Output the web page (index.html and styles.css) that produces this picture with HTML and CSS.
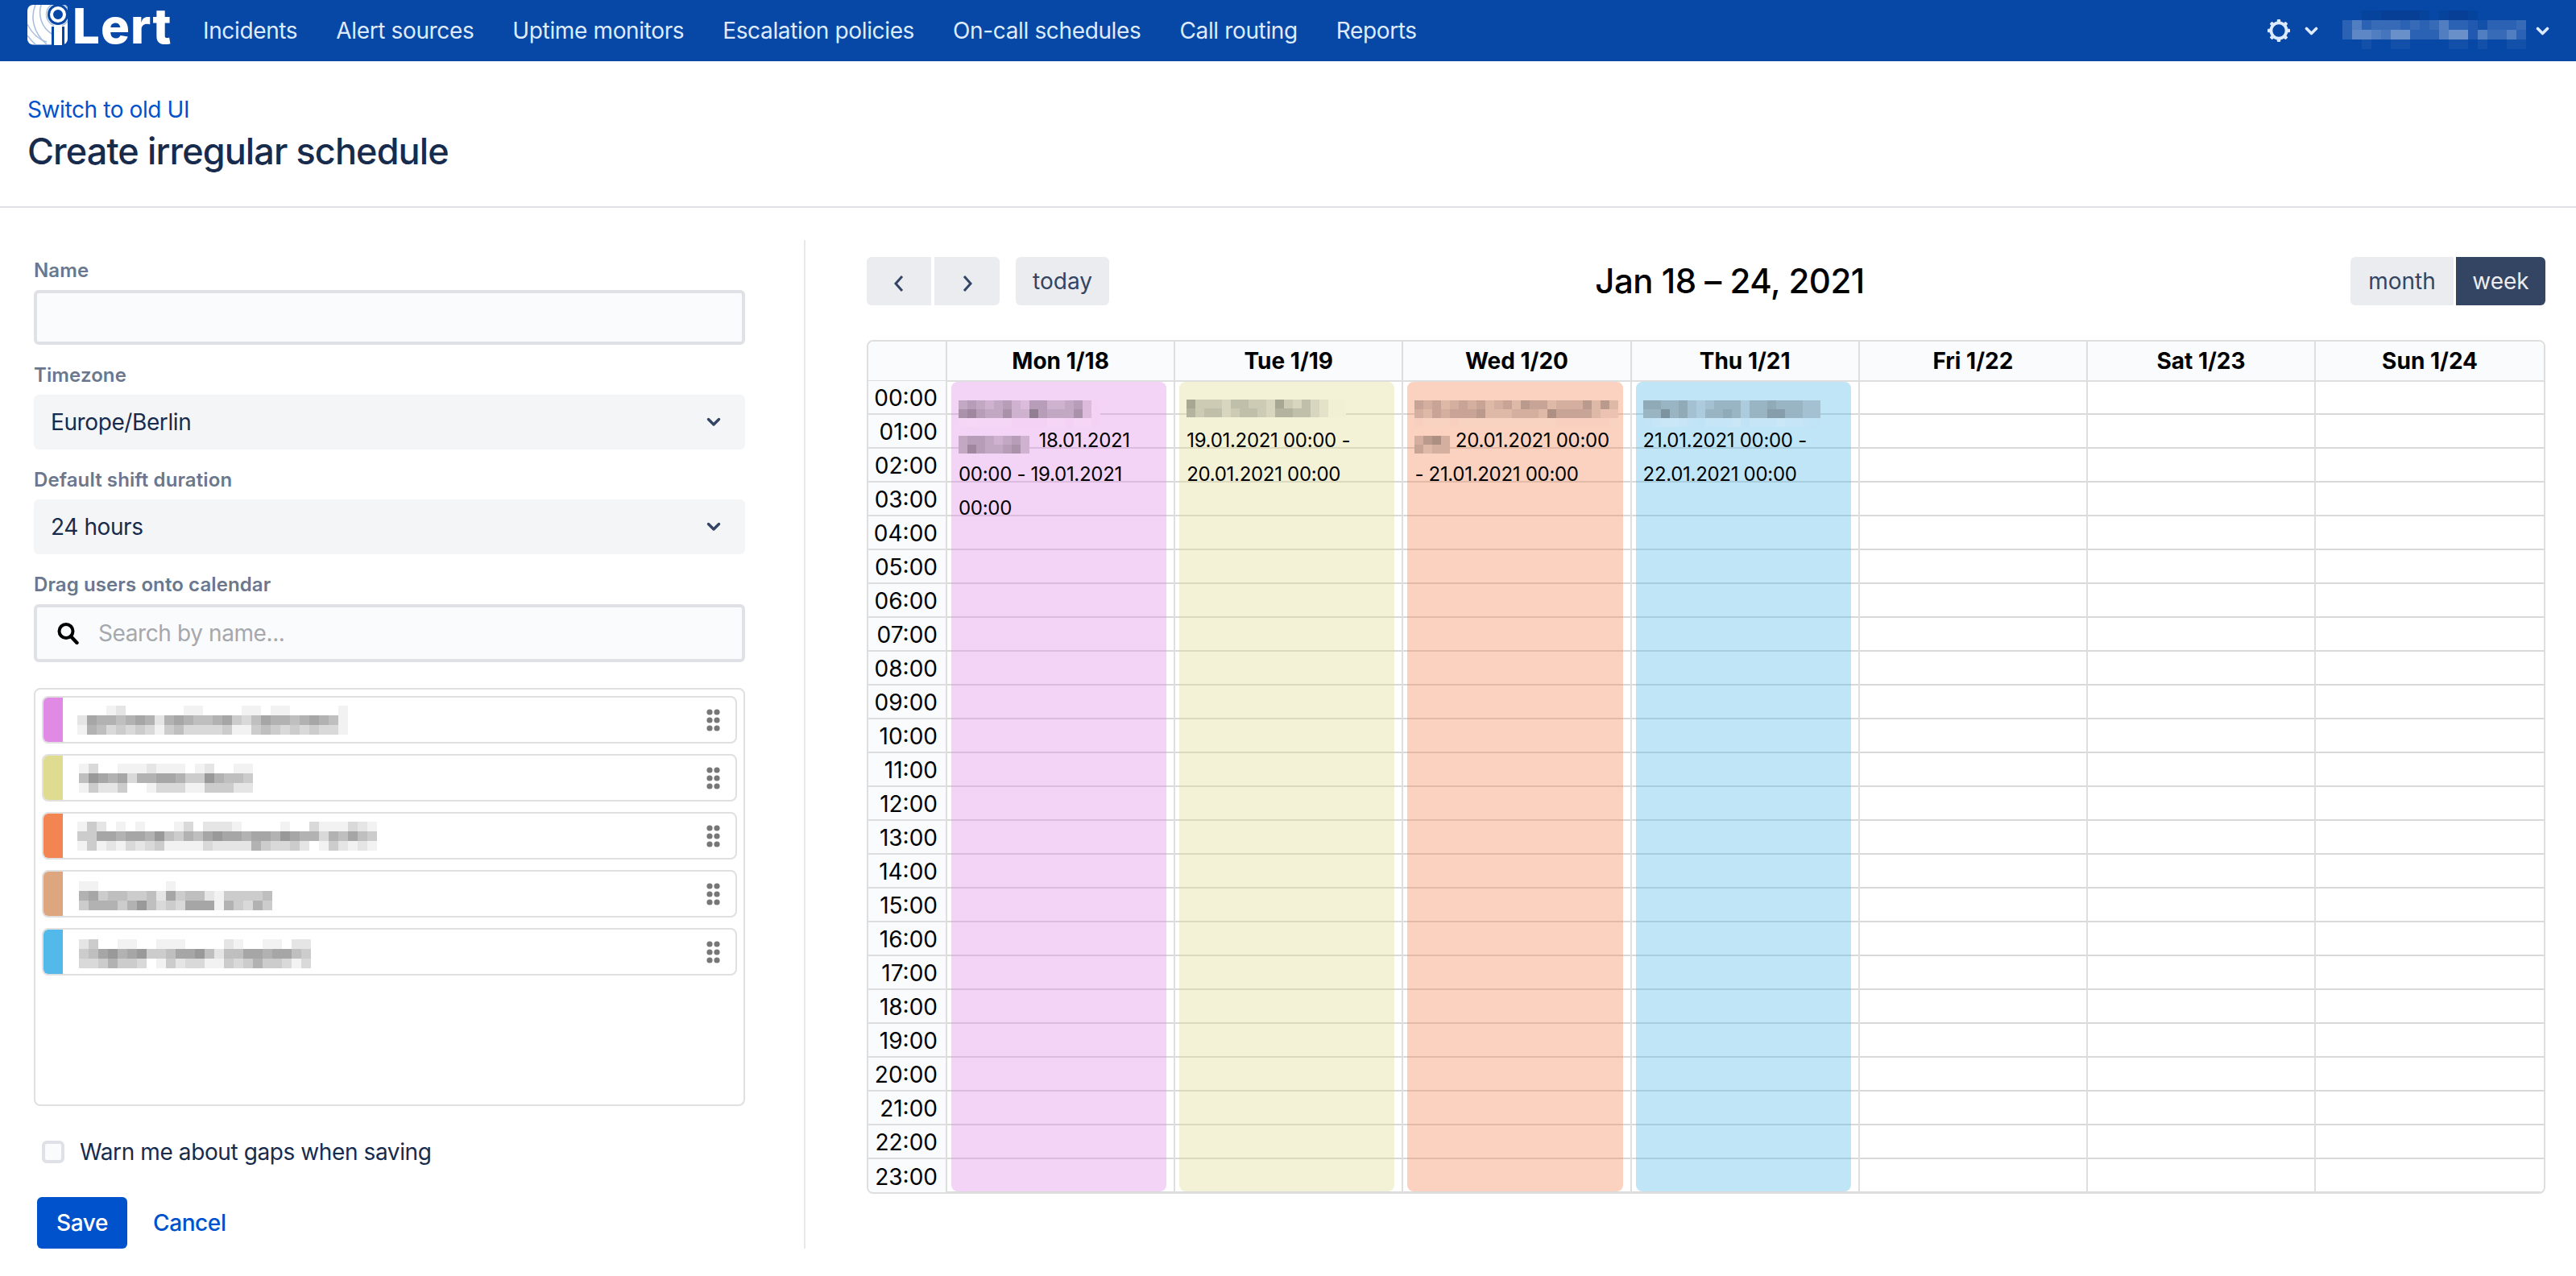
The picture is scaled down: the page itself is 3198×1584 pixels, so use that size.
FILE: index.html
```html
<!DOCTYPE html>
<html lang="en">
<head>
<meta charset="utf-8">
<title>Create irregular schedule</title>
<link rel="stylesheet" href="styles.css">
</head>
<body>
<nav class="nav">
  <a class="logo">
    <svg class="logo-mark" width="50" height="50" viewBox="0 0 50 50">
      <rect x="0" y="0" width="50" height="49.5" rx="7" fill="#fff"/>
      <g fill="none" stroke="#a9bfe0" stroke-width="1.6">
        <path d="M10 0C4 14 6 34 24 49"/>
        <path d="M0 24C6 36 14 43 24 46"/>
        <path d="M17 0C13 14 18 28 30 36"/>
        <path d="M0 38C3 42 6 46 10 49"/>
      </g>
      <circle cx="38" cy="12" r="13" fill="#0747a6"/>
      <circle cx="38" cy="12" r="8" fill="none" stroke="#fff" stroke-width="4"/>
      <circle cx="38" cy="12" r="14.5" fill="none" stroke="#a9bfe0" stroke-width="1.4"/>
      <path d="M30 27h16v23H30z" fill="#0747a6"/>
      <path d="M33 25h10v25H33z" fill="#fff"/>
    </svg>
    <span class="logo-text">Lert</span>
  </a>
  <ul class="nav-links">
    <li>Incidents</li>
    <li>Alert sources</li>
    <li>Uptime monitors</li>
    <li>Escalation policies</li>
    <li>On-call schedules</li>
    <li>Call routing</li>
    <li>Reports</li>
  </ul>
  <div class="nav-right">
    <svg class="gear" width="28" height="28" viewBox="0 0 28 28">
      <circle cx="14" cy="14" r="9.6" fill="none" stroke="#deebff" stroke-width="3.8"/>
      <g fill="#deebff">
        <rect x="11.8" y="0" width="4.4" height="4" rx="1"/>
        <rect x="11.8" y="0" width="4.4" height="4" rx="1" transform="rotate(45 14 14)"/>
        <rect x="11.8" y="0" width="4.4" height="4" rx="1" transform="rotate(90 14 14)"/>
        <rect x="11.8" y="0" width="4.4" height="4" rx="1" transform="rotate(135 14 14)"/>
        <rect x="11.8" y="0" width="4.4" height="4" rx="1" transform="rotate(180 14 14)"/>
        <rect x="11.8" y="0" width="4.4" height="4" rx="1" transform="rotate(225 14 14)"/>
        <rect x="11.8" y="0" width="4.4" height="4" rx="1" transform="rotate(270 14 14)"/>
        <rect x="11.8" y="0" width="4.4" height="4" rx="1" transform="rotate(315 14 14)"/>
      </g>
    </svg>
    <svg class="nav-chev" width="17" height="12" viewBox="0 0 17 12"><path d="M2.5 2.5l6 6 6-6" fill="none" stroke="#deebff" stroke-width="3.6" stroke-linecap="round" stroke-linejoin="round"/></svg>
    <svg class="mosaic nav-name" data-cell="12" data-rows="0011222210122100000/cfcdddcdcdfccbacccd/cggfehhcccfhhbfddfc/00a00aa0000aa0a00aa"></svg>
    <svg class="nav-chev" width="17" height="12" viewBox="0 0 17 12"><path d="M2.5 2.5l6 6 6-6" fill="none" stroke="#deebff" stroke-width="3.6" stroke-linecap="round" stroke-linejoin="round"/></svg>
  </div>
</nav>

<header class="page-head">
  <a class="switch">Switch to old UI</a>
  <h1 class="title">Create irregular schedule</h1>
</header>

<main class="main">
  <section class="form">
    <label class="label label-first">Name</label>
    <div class="input"></div>

    <label class="label">Timezone</label>
    <div class="select">
      <span>Europe/Berlin</span>
      <svg width="18" height="12" viewBox="0 0 18 12"><path d="M2.5 2.5l6.5 6.5 6.5-6.5" fill="none" stroke="#344563" stroke-width="3.4" stroke-linecap="round" stroke-linejoin="round"/></svg>
    </div>

    <label class="label">Default shift duration</label>
    <div class="select">
      <span>24 hours</span>
      <svg width="18" height="12" viewBox="0 0 18 12"><path d="M2.5 2.5l6.5 6.5 6.5-6.5" fill="none" stroke="#344563" stroke-width="3.4" stroke-linecap="round" stroke-linejoin="round"/></svg>
    </div>

    <label class="label">Drag users onto calendar</label>
    <div class="input search">
      <svg width="28" height="28" viewBox="0 0 28 28"><circle cx="12" cy="11.5" r="8.5" fill="none" stroke="#000" stroke-width="4"/><path d="M18 18l7.5 8" fill="none" stroke="#000" stroke-width="4.4" stroke-linecap="round"/></svg>
      <span class="placeholder">Search by name...</span>
    </div>

    <div class="user-list">
      <div class="user">
        <span class="swatch swatch-pink"></span>
        <svg class="mosaic" data-cell="12" data-rows="0001200000011000011011000001/2766567626765567435766567651/1653434314533334114543434331"></svg>
        <svg class="handle" width="17" height="28" viewBox="0 0 17 28"><g fill="#777"><circle cx="4" cy="4" r="3.6"/><circle cx="13" cy="4" r="3.6"/><circle cx="4" cy="14" r="3.6"/><circle cx="13" cy="14" r="3.6"/><circle cx="4" cy="24" r="3.6"/><circle cx="13" cy="24" r="3.6"/></g></svg>
      </div>
      <div class="user">
        <span class="swatch swatch-yellow"></span>
        <svg class="mosaic mosaic-in" data-cell="12" data-rows="1300111211101200110/5876736677644865540/1422400133311444220"></svg>
        <svg class="handle" width="17" height="28" viewBox="0 0 17 28"><g fill="#777"><circle cx="4" cy="4" r="3.6"/><circle cx="13" cy="4" r="3.6"/><circle cx="4" cy="14" r="3.6"/><circle cx="13" cy="14" r="3.6"/><circle cx="4" cy="24" r="3.6"/><circle cx="13" cy="24" r="3.6"/></g></svg>
      </div>
      <div class="user">
        <span class="swatch swatch-orange"></span>
        <svg class="mosaic" data-cell="12" data-rows="1420101000130222100001003111321/4477677685465787767768766365754/1412132341111322226433420142121"></svg>
        <svg class="handle" width="17" height="28" viewBox="0 0 17 28"><g fill="#777"><circle cx="4" cy="4" r="3.6"/><circle cx="13" cy="4" r="3.6"/><circle cx="4" cy="14" r="3.6"/><circle cx="13" cy="14" r="3.6"/><circle cx="4" cy="24" r="3.6"/><circle cx="13" cy="24" r="3.6"/></g></svg>
      </div>
      <div class="user">
        <span class="swatch swatch-tan"></span>
        <svg class="mosaic mosaic-in mosaic-low" data-cell="12" data-rows="110000000100000000000/674554452745521444450/466646853437771643640"></svg>
        <svg class="handle" width="17" height="28" viewBox="0 0 17 28"><g fill="#777"><circle cx="4" cy="4" r="3.6"/><circle cx="13" cy="4" r="3.6"/><circle cx="4" cy="14" r="3.6"/><circle cx="13" cy="14" r="3.6"/><circle cx="4" cy="24" r="3.6"/><circle cx="13" cy="24" r="3.6"/></g></svg>
      </div>
      <div class="user">
        <span class="swatch swatch-blue"></span>
        <svg class="mosaic mosaic-in mosaic-low" data-cell="12" data-rows="240011001110000210011022/457867844577852557767754/334644301423311434644313"></svg>
        <svg class="handle" width="17" height="28" viewBox="0 0 17 28"><g fill="#777"><circle cx="4" cy="4" r="3.6"/><circle cx="13" cy="4" r="3.6"/><circle cx="4" cy="14" r="3.6"/><circle cx="13" cy="14" r="3.6"/><circle cx="4" cy="24" r="3.6"/><circle cx="13" cy="24" r="3.6"/></g></svg>
      </div>
    </div>

    <div class="warn">
      <span class="checkbox"></span>
      <span>Warn me about gaps when saving</span>
    </div>

    <div class="actions">
      <button class="save">Save</button>
      <a class="cancel">Cancel</a>
    </div>
  </section>

  <section class="calendar">
    <div class="toolbar">
      <div class="tool-left">
        <div class="btn-group">
          <button class="btn btn-icon btn-prev"><svg width="16" height="22" viewBox="0 0 16 22"><path d="M12 2L4 11l8 9" fill="none" stroke="#344563" stroke-width="3"/></svg></button>
          <button class="btn btn-icon btn-next"><svg width="16" height="22" viewBox="0 0 16 22"><path d="M4 2l8 9-8 9" fill="none" stroke="#344563" stroke-width="3"/></svg></button>
        </div>
        <button class="btn btn-today">today</button>
      </div>
      <h2 class="range">Jan 18 – 24, 2021</h2>
      <div class="btn-group tool-right">
        <button class="btn btn-month">month</button>
        <button class="btn btn-week">week</button>
      </div>
    </div>

    <div class="cal">
      <div class="cal-head">
        <div class="head-cell"></div>
        <div class="head-cell">Mon 1/18</div>
        <div class="head-cell">Tue 1/19</div>
        <div class="head-cell">Wed 1/20</div>
        <div class="head-cell">Thu 1/21</div>
        <div class="head-cell">Fri 1/22</div>
        <div class="head-cell">Sat 1/23</div>
        <div class="head-cell">Sun 1/24</div>
      </div>
      <div class="cal-body">
        <div class="times">
          <div class="time">00:00</div><div class="time">01:00</div><div class="time">02:00</div><div class="time">03:00</div>
          <div class="time">04:00</div><div class="time">05:00</div><div class="time">06:00</div><div class="time">07:00</div>
          <div class="time">08:00</div><div class="time">09:00</div><div class="time">10:00</div><div class="time">11:00</div>
          <div class="time">12:00</div><div class="time">13:00</div><div class="time">14:00</div><div class="time">15:00</div>
          <div class="time">16:00</div><div class="time">17:00</div><div class="time">18:00</div><div class="time">19:00</div>
          <div class="time">20:00</div><div class="time">21:00</div><div class="time">22:00</div><div class="time">23:00</div>
        </div>
        <div class="day">
          <div class="event event-pink">
            <svg class="mosaic ev-name ev-pink" data-cell="11" data-rows="4543453255334520/6754463385444620/bcbbbb0000bb0bb0"></svg>
            <svg class="mosaic ev-name2 ev-gap ev-pink" data-cell="11" data-rows="45543453/47544563"></svg>
            18.01.2021 00:00 - 19.01.2021 00:00
          </div>
        </div>
        <div class="day">
          <div class="event event-yellow">
            <svg class="mosaic ev-name-short ev-yellow" data-cell="11" data-rows="633324433263242100/534423443255442100"></svg>
            19.01.2021 00:00 - 20.01.2021 00:00
          </div>
        </div>
        <div class="day">
          <div class="event event-orange">
            <svg class="mosaic ev-name ev-orange" data-cell="11" data-rows="43423434234254423335252/32434445222333264444211/abbbabbbbbbbbbbbaaaaaab"></svg>
            <svg class="mosaic ev-name2 ev-orange" data-cell="11" data-rows="3563/4233"></svg>
            20.01.2021 00:00 - 21.01.2021 00:00
          </div>
        </div>
        <div class="day">
          <div class="event event-blue">
            <svg class="mosaic ev-name ev-blue" data-cell="11" data-rows="55445323444244544433/44745324454244664433/abccba0bbbc0bbbcbba0"></svg>
            21.01.2021 00:00 - 22.01.2021 00:00
          </div>
        </div>
        <div class="day"></div>
        <div class="day"></div>
        <div class="day"></div>
      </div>
    </div>
  </section>
</main>
<script src="mosaic.js"></script>
</body>
</html>
```

FILE: styles.css
```css
* { box-sizing: border-box; }
html, body { margin: 0; padding: 0; }
body {
  font-family: Inter, "Liberation Sans", sans-serif;
  font-size: 28px;
  letter-spacing: -.4px;
  color: #172b4d;
  background: #fff;
}
button { font-family: inherit; font-size: inherit; border: 0; padding: 0; }

/* top bar */
.nav {
  display: flex;
  align-items: center;
  height: 76px;
  padding: 0 33px 0 34px;
  background: #0747a6;
  color: #deebff;
  letter-spacing: -.36px;
}
.logo { display: flex; align-items: flex-start; height: 76px; width: 218px; }
.logo-mark { margin-top: 6px; flex: none; }
.logo-text {
  margin-left: 6px;
  font-size: 60px;
  font-weight: 800;
  line-height: 64px;
  color: #fff;
  letter-spacing: 1px;
}
.nav-links { display: flex; gap: 48px; margin: 0; padding: 0; list-style: none; }
.nav-right { display: flex; align-items: center; margin-left: auto; }
.nav-chev { margin-left: 18px; margin-top: 2px; }
.nav-name { margin-left: 30px; margin-top: -2px; margin-right: -6px; }
.gear { display: block; }

/* page heading */
.page-head { padding: 40px 34px 38px; border-bottom: 2px solid #dfe1e6; }
.switch { display: block; line-height: 40px; color: #0052cc; }
.title { margin: 2px 0 0; font-size: 45px; font-weight: 500; line-height: 60px; letter-spacing: -.9px; }

/* layout */
.main { display: flex; align-items: flex-start; padding: 40px 38px 34px 42px; }
.form {
  display: flex;
  flex-direction: column;
  flex: none;
  width: 958px;
  height: 1252px;
  padding: 21px 73px 0 0;
  border-right: 2px solid #e8e9ed;
}
.calendar { flex: 1; min-width: 0; padding: 21px 0 0 76px; }

/* form */
.label {
  display: block;
  margin: 22px 0 8px;
  font-size: 24px;
  font-weight: 600;
  line-height: 32px;
  letter-spacing: .1px;
  color: #6b778c;
}
.label-first { margin-top: 1px; }
.input {
  height: 68px;
  background: #fafbfc;
  border: 4px solid #dfe1e6;
  border-radius: 6px;
}
.search {
  display: flex;
  align-items: center;
  gap: 24px;
  height: 72px;
  padding-left: 24px;
}
.placeholder { color: #a5a8ad; }
.select {
  display: flex;
  align-items: center;
  justify-content: space-between;
  height: 68px;
  padding: 0 30px 0 21px;
  background: #f4f5f7;
  border-radius: 6px;
}
.user-list {
  display: flex;
  flex-direction: column;
  gap: 13px;
  height: 519px;
  margin-top: 32px;
  padding: 8px;
  border: 2px solid #e0e0e0;
  border-radius: 8px;
}
.user {
  display: flex;
  align-items: center;
  height: 59px;
  flex: none;
  border: 2px solid #e0e0e0;
  border-radius: 8px;
  overflow: hidden;
}
.swatch { align-self: stretch; width: 24px; flex: none; }
.swatch-pink { background: #e08ae6; }
.swatch-yellow { background: #dfdc92; }
.swatch-orange { background: #f38552; }
.swatch-tan { background: #dda67f; }
.swatch-blue { background: #52b9ea; }
.mosaic { display: block; flex: none; shape-rendering: crispEdges; }
.user .mosaic { margin-left: 18px; }
.user .mosaic-in { margin-left: 20px; }
.user .mosaic-low { margin-top: 4px; }
.handle { margin-left: auto; margin-right: 19px; flex: none; }
.warn {
  display: flex;
  align-items: center;
  gap: 19px;
  margin: 42px 0 0 10px;
  line-height: 30px;
}
.checkbox {
  width: 28px;
  height: 28px;
  background: #fafbfc;
  border: 4px solid #dfe1e6;
  border-radius: 6px;
}
.actions { display: flex; align-items: center; gap: 32px; margin: 41px 0 0 4px; }
.save {
  width: 112px;
  height: 64px;
  background: #0052cc;
  color: #fff;
  font-weight: 500;
  letter-spacing: -.4px;
  border-radius: 6px;
}
.cancel { color: #0052cc; font-weight: 500; }

/* calendar toolbar */
.toolbar {
  display: flex;
  align-items: center;
  justify-content: space-between;
  height: 60px;
  margin-bottom: 43px;
}
.tool-left { display: flex; gap: 20px; width: 301px; }
.btn-group { display: flex; gap: 4px; }
.btn {
  height: 60px;
  background: #ebecf0;
  color: #344563;
  border-radius: 6px;
}
.btn-icon { display: flex; align-items: center; justify-content: center; width: 81px; padding-top: 6px; }
.btn-prev { width: 80px; border-radius: 6px 0 0 6px; }
.btn-next { border-radius: 0 6px 6px 0; }
.btn-today { width: 116px; }
.range {
  margin: 0;
  font-size: 42px;
  font-weight: 500;
  color: #000;
  line-height: 60px;
  letter-spacing: -.5px;
}
.tool-right { gap: 3px; width: 242px; }
.btn-month { width: 128px; border-radius: 6px 0 0 6px; }
.btn-week { width: 111px; background: #344563; color: #ebecf0; border-radius: 0 6px 6px 0; }

/* calendar grid */
.cal {
  border: 2px solid #dedede;
  border-radius: 8px;
  overflow: hidden;
  color: #000;
  letter-spacing: 0;
}
.cal-head, .cal-body {
  display: grid;
  grid-template-columns: 96px repeat(6, 283.2px) 1fr;
}
.cal-head { height: 50px; border-bottom: 2px solid #dedede; }
.head-cell {
  display: flex;
  align-items: center;
  justify-content: center;
  background: #fafbfc;
  font-weight: 700;
  border-left: 2px solid #dedede;
}
.head-cell:first-child { border-left: 0; }
.cal-body {
  background-image: repeating-linear-gradient(to bottom, transparent 0 39px, #d9d9d9 39px 41px, transparent 41px 42px);
  background-size: 100% 42px;
  height: 1006px;
}
.times { margin-top: -1px; background: #fafbfc; }
.time {
  display: flex;
  align-items: center;
  justify-content: flex-end;
  height: 42px;
  padding: 1px 10px 0 0;
  border-bottom: 2px solid #dedede;
}
.time:last-child { border-bottom: 0; }
.day { position: relative; border-left: 2px solid #dedede; }
.event {
  position: absolute;
  top: 0;
  bottom: 2px;
  left: 5px;
  right: 9px;
  padding: 10px 9px 0;
  border-radius: 8px;
  font-size: 24px;
  line-height: 42px;
  letter-spacing: -.3px;
  color: #000;
}
.event-pink { background: rgba(224, 138, 230, .37); }
.event-yellow { background: rgba(223, 220, 146, .37); }
.event-orange { background: rgba(243, 133, 82, .37); }
.event-blue { background: rgba(82, 185, 234, .37); }
.event .mosaic { display: inline-block; margin-top: -20px; margin-bottom: -20px; }
.event .ev-gap { margin-right: 5px; }
.ev-name { vertical-align: 3px; }
.ev-name-short { vertical-align: 15px; }
.ev-name2 { vertical-align: 12px; }
.ev-pink { background: #f4d2f5; }
.ev-yellow { background: #f1efd4; }
.ev-orange { background: #f9cebc; }
.ev-blue { background: #c0e3f6; }
```

FILE: mosaic.js
```js
// Draws the pixelated (redacted) names from the digit grids in data-rows.
// 0-9 darken in steps of .05, a-j lighten in steps of .05.
document.querySelectorAll('svg.mosaic').forEach(function (svg) {
  var cell = Number(svg.dataset.cell);
  var rows = svg.dataset.rows.split('/');
  var cols = rows[0].length;
  svg.setAttribute('width', cols * cell);
  svg.setAttribute('height', rows.length * cell);
  rows.forEach(function (row, y) {
    row.split('').forEach(function (ch, x) {
      if (ch === '0') return;
      var isLight = ch >= 'a';
      var step = isLight ? ch.charCodeAt(0) - 96 : Number(ch);
      var r = document.createElementNS('http://www.w3.org/2000/svg', 'rect');
      r.setAttribute('x', x * cell);
      r.setAttribute('y', y * cell);
      r.setAttribute('width', cell);
      r.setAttribute('height', cell);
      r.setAttribute('fill', isLight ? '#fff' : '#000');
      r.setAttribute('fill-opacity', step * 0.05);
      svg.appendChild(r);
    });
  });
});
```
